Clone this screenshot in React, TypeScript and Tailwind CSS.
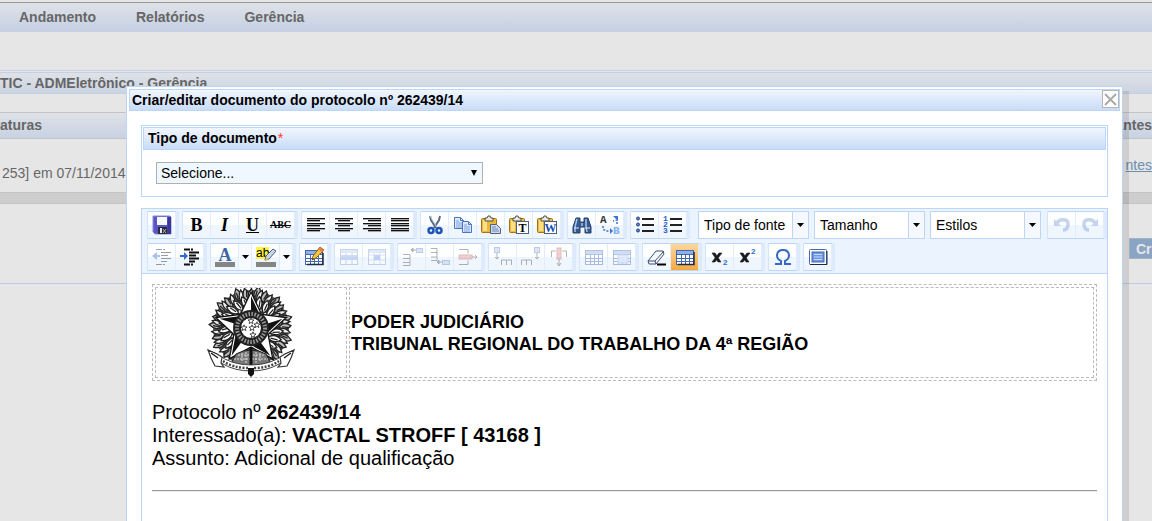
import type { ReactNode } from 'react'

const menuItems = ['Andamento', 'Relatórios', 'Gerência']

const BLUE = '#4468b0'
const INK = '#1c2b4a'

const Icon = ({ children, faded }: { children: ReactNode; faded?: boolean }) => (
  <svg width="20" height="20" viewBox="0 0 20 20" fill="none" className={faded ? 'overflow-visible opacity-40' : 'overflow-visible'}>
    {children}
  </svg>
)

const SaveIcon = () => (
  <Icon>
    <path d="M1 1h17l1 1v17H3l-2-2z" fill="#5a55c4" stroke="#8d8be0" />
    <path d="M16 2h3v17h-4z" fill="#3b3797" />
    <rect x="5" y="2" width="10" height="8" fill="#f6f8ff" />
    <rect x="6" y="12" width="9" height="7" fill="#2a2a3a" />
    <path d="M8 13h2v5H8z" fill="#e8e8f2" />
    <path d="M11 14l3 4M14 14l-3 4" stroke="#aaa" />
  </Icon>
)

const AlignIcon = ({ rows }: { rows: number[][] }) => (
  <Icon>
    {rows.map(([x, w], i) => (
      <g key={i} fill="#111">
        <rect x={x} y={3 + i * 2 + Math.floor(i / 2)} width={w} height="1" />
        <rect x={x} y={4 + i * 2 + Math.floor(i / 2)} width={w} height="1" opacity=".35" />
      </g>
    ))}
  </Icon>
)

const alignRows = {
  left: [[1, 18], [1, 13], [1, 18], [1, 13], [1, 18], [1, 13]],
  center: [[1, 18], [4, 12], [1, 18], [4, 12], [1, 18], [4, 12]],
  right: [[1, 18], [6, 13], [1, 18], [6, 13], [1, 18], [6, 13]],
  full: [[1, 18], [1, 18], [1, 18], [1, 18], [1, 18], [1, 18]],
}

const CutIcon = () => (
  <Icon>
    <path d="M5 1l1 4 5 8M15 1l-1 4-5 8" stroke="#596b85" strokeWidth="2" />
    <path d="M5 1l6 10" stroke="#b9c6d8" />
    <ellipse cx="6" cy="15.500" rx="2.500" ry="2.500" stroke="#1f56b5" strokeWidth="2.500" />
    <ellipse cx="14" cy="15.500" rx="2.500" ry="2.500" stroke="#1f56b5" strokeWidth="2.500" />
  </Icon>
)

const Page = ({ x, y }: { x: number; y: number }) => (
  <g transform={`translate(${x} ${y})`}>
    <path d="M.5.5h6l3 3v8h-9z" fill="#dce9fc" stroke="#4a74c4" />
    <path d="M6.500.5v3h3" stroke="#4a74c4" />
    <path d="M2 4h3M2 6h6M2 8h6M2 10h6" stroke="#7ea2de" />
  </g>
)

const CopyIcon = () => (
  <Icon>
    <Page x={1} y={2} />
    <Page x={9} y={6} />
  </Icon>
)

const PasteIcon = ({ letter }: { letter?: string }) => (
  <Icon>
    <rect x=".5" y="3.500" width="15" height="14" rx="1" fill="#e9b93b" stroke="#a37412" />
    <path d="M2 5h4v11H2z" fill="#f9df8c" />
    <path d="M4 6V3h2l1-2h2l1 2h2v3z" fill="#e3e6ec" stroke="#5c4d25" />
    {letter ? (
      <>
        <rect x="7.500" y="6.500" width="12" height="12" fill="#fff" stroke="#50607c" />
        <text x="13.500" y="17" textAnchor="middle" fontFamily="Liberation Serif" fontWeight="bold" fontSize="12" fill={letter === 'W' ? '#174fb0' : '#000'}>
          {letter}
        </text>
      </>
    ) : (
      <>
        <path d="M9.500 9.500h6l4 4v5h-10z" fill="#cfdcef" stroke="#50607c" />
        <path d="M11 12h4M11 14h6M11 16h7" stroke="#7088b0" />
      </>
    )}
  </Icon>
)

const FindIcon = () => (
  <Icon>
    <path d="M4 3h4v4h4V3h4l3 9v6h-6v-6H8v6H1v-6z" fill="#34588f" stroke="#26406e" />
    <path d="M5 4L3 12v5M14 4v7l1 6M10 8v3" stroke="#a9c4ea" strokeWidth="1.500" />
    <path d="M2 13h5M13 13h5" stroke="#dfeaf8" />
  </Icon>
)

const ReplaceIcon = () => (
  <Icon>
    <text x="0" y="8" fontFamily="Liberation Mono" fontWeight="bold" fontSize="11" fill="#333">A</text>
    <text x="13" y="19" fontFamily="Liberation Mono" fontWeight="bold" fontSize="11" fill="#7fb0ee">B</text>
    <path d="M3 11v3l3 2h5" stroke="#3e73d2" strokeWidth="1.500" strokeDasharray="2 1.500" />
    <path d="M10 13l3 3-3 3z" fill="#3e73d2" />
    <path d="M17 9V5l-4 1" stroke="#3e73d2" strokeWidth="1.500" strokeDasharray="2 1.500" />
    <path d="M13 1h5v5z" fill="#3e73d2" />
  </Icon>
)

const ListIcon = ({ numbered }: { numbered?: boolean }) => (
  <Icon>
    {[0, 1, 2].map(i => (
      <g key={i}>
        {numbered ? (
          <text x="0" y={6 + i * 6} fontFamily="Liberation Mono" fontWeight="bold" fontSize="8" fill="#2c5cc0">{i + 1}</text>
        ) : (
          <circle cx="3" cy={3.5 + i * 6} r="1.500" fill="#5a86d8" stroke="#243f7a" />
        )}
        <rect x="7" y={3 + i * 6} width="12" height="2" fill="#222" />
      </g>
    ))}
  </Icon>
)

const UndoIcon = ({ flip }: { flip?: boolean }) => (
  <Icon faded>
    <g transform={flip ? 'translate(20 0) scale(-1 1)' : undefined}>
      <path d="M2 4v7h7z" fill="#7898da" />
      <path d="M5 8c3-5 11-4 11 1 0 4-2 6-5 6" stroke="#7898da" strokeWidth="3.500" />
    </g>
  </Icon>
)

const IndentIcon = ({ out }: { out?: boolean }) => (
  <Icon faded={out}>
    <path d="M4 2.500h6M11 2.500h2M9 5.500h10M9 8.500h7M9 11.500h10M9 14.500h6M4 17.500h6M11 17.500h2" stroke="#111" strokeWidth={out ? 1 : 2} />
    <path d={out ? 'M5 5v8L0 9zM5 8h3v2H5z' : 'M4 5v8l4-4zM0 8h4v2H0z'} fill="#2f6cd0" />
  </Icon>
)

const TextColorIcon = () => (
  <Icon>
    <text x="10" y="14" textAnchor="middle" fontFamily="Liberation Serif" fontWeight="bold" fontSize="18" fill="#3d66a3">A</text>
    <rect x="0" y="15" width="20" height="5" fill="#858585" />
  </Icon>
)

const HighlightIcon = () => (
  <Icon>
    <rect x="0" y="0" width="13" height="12" fill="#fdf44a" />
    <text x="0" y="10" fontFamily="Liberation Sans" fontSize="12" fill="#000">ab</text>
    <path d="M17 2l3 2-7 8-4 1 1-4z" fill="#c9d6e9" stroke="#4c648c" />
    <path d="M8 14l3-3 1 2z" fill="#e8c52c" />
    <rect x="0" y="15" width="20" height="5" fill="#858585" />
  </Icon>
)

const Grid = () => (
  <>
    <rect x="1.500" y="3.500" width="17" height="14" fill="#fff" stroke={BLUE} />
    <path d="M2 4h16v3H2z" fill="#8fb0e8" />
    <path d="M6.500 7v10M10.500 7v10M14.500 7v10M2 7.500h16M2 11.500h16M2 14.500h16" stroke={BLUE} />
  </>
)

const EditTableIcon = () => (
  <Icon>
    <Grid />
    <path d="M3 17.500h16V6" stroke={INK} strokeWidth="1.500" />
    <path d="M16 0l4 3-8 8-4 2 1-4z" fill="#f3c53b" stroke="#8a651a" />
    <path d="M16 0l4 3-2 2-4-3z" fill="#e57a58" />
    <path d="M8 13l2-1-1-1z" fill="#222" />
  </Icon>
)

const RowPropsIcon = () => (
  <Icon faded>
    <rect x="1.500" y="2.500" width="17" height="15" fill="#fff" stroke="#7d98c8" />
    <path d="M2 3h16v3H2z" fill="#b7cbed" />
    <rect x="2" y="8" width="16" height="5" fill="#86a8e4" />
    <path d="M7 6v2M13 6v2M7 13v4M13 13v4" stroke="#7d98c8" />
  </Icon>
)

const CellPropsIcon = () => (
  <Icon faded>
    <rect x="1.500" y="2.500" width="17" height="15" fill="#fff" stroke="#7d98c8" />
    <path d="M2 3h16v3H2z" fill="#b7cbed" />
    <path d="M7 6v11M13 6v11M2 8h16M2 13h16" stroke="#a9bce0" />
    <rect x="7" y="8" width="6" height="5" fill="#6f96dd" />
  </Icon>
)

const RowBeforeIcon = () => (
  <Icon faded>
    <path d="M1 7.500h7v4H1M8 12v3M1 15.500h7v3H1" stroke="#444" />
    <path d="M10 3h4M9 3l2-2v4z" stroke="#444" fill="#444" />
    <rect x="14.500" y="1.500" width="6" height="4" fill="#a9c1ec" stroke="#6481b8" />
  </Icon>
)

const RowAfterIcon = () => (
  <Icon faded>
    <path d="M1 1.500h6v4H1M7 5v5H1M7 10v3.500H1" stroke="#444" />
    <path d="M8 15h4M7 15l2-2v4z" stroke="#444" fill="#444" />
    <rect x="12.500" y="13.500" width="7" height="4" fill="#a9c1ec" stroke="#6481b8" />
  </Icon>
)

const RowDeleteIcon = () => (
  <Icon faded>
    <path d="M1 2.500h9v4M1 17.500h9v-4" stroke="#444" />
    <rect x="1" y="8" width="13" height="4" fill="#e58a8a" stroke="#c05a5a" />
    <path d="M14 10h5M17 8l2 2-2 2" stroke="#444" />
  </Icon>
)

const ColIcon = ({ after }: { after?: boolean }) => (
  <Icon faded>
    <path d={after ? 'M.5 18v-5h5v5M5.500 13h5v5' : 'M8.500 18v-5h5v5M13.500 13h5v5'} stroke="#444" />
    <g transform={after ? 'translate(12 0)' : undefined}>
      <rect x="1.500" y=".5" width="5" height="5" fill="#a9c1ec" stroke="#6481b8" />
      <path d="M4 6v6M2 10l2 2 2-2" stroke="#444" />
    </g>
  </Icon>
)

const ColDeleteIcon = () => (
  <Icon faded>
    <path d="M2.500 10V4h4M17.500 10V4h-4" stroke="#444" />
    <rect x="8" y="1" width="4" height="11" fill="#e58a8a" stroke="#c05a5a" />
    <path d="M10 12v7M8 16l2 3 2-3" stroke="#444" />
  </Icon>
)

const GridIcon = ({ faded }: { faded?: boolean }) => (
  <Icon faded={faded}>
    <Grid />
    {!faded && <path d="M3 17.500h16V5" stroke={INK} strokeWidth="1.500" />}
  </Icon>
)

const MergeIcon = () => (
  <Icon faded>
    <Grid />
    <rect x="6" y="8" width="10" height="8" fill="#c2d6f7" stroke="#86a8e4" />
  </Icon>
)

const EraserIcon = () => (
  <Icon>
    <path d="M1 14l8-10h7l1 3-8 10H2z" fill="#f4f7fc" stroke="#3d4f70" />
    <path d="M1 14h7l9-10M8 14l1 3" stroke="#3d4f70" />
    <path d="M10 17.500h9" stroke="#000" strokeWidth="2" />
  </Icon>
)

const ScriptIcon = ({ sup }: { sup?: boolean }) => (
  <Icon>
    <path d="M2 6h3l6 9H8zM9 6h3l-7 9H2z" fill="#1c1c1c" stroke="#1c1c1c" strokeWidth=".6" />
    <text x="13" y={sup ? 7 : 18} fontFamily="Liberation Sans" fontWeight="bold" fontSize="8" fill="#2f6cd0">2</text>
  </Icon>
)

const OmegaIcon = () => (
  <Icon>
    <path d="M2 17h6v-3C2 11 3 3 10 3s8 8 2 11v3h6" stroke="#3567c4" strokeWidth="2" />
  </Icon>
)

const FullscreenIcon = () => (
  <Icon>
    <rect x="1.500" y="2.500" width="17" height="15" rx="1" fill="#fff" stroke={BLUE} />
    <path d="M2 17.500h17V4" stroke={INK} />
    <rect x="4" y="5" width="12" height="10" fill="#6d97e4" stroke={BLUE} />
    <path d="M6 7.500h8M6 10h8M6 12.500h8" stroke="#c9dcfb" />
  </Icon>
)

type Tool = { label: string; icon: ReactNode; menu?: boolean; active?: boolean }

const mainTools: Tool[][] = [
  [{ label: 'Salvar', icon: <SaveIcon /> }],
  [
    { label: 'Negrito', icon: <span className="font-['Liberation_Serif',serif] text-[18px] font-black">B</span> },
    { label: 'Itálico', icon: <span className="font-['Liberation_Serif',serif] text-[18px] font-bold italic">I</span> },
    { label: 'Sublinhado', icon: <span className="font-['Liberation_Serif',serif] text-[18px] font-bold underline">U</span> },
    { label: 'Riscado', icon: <span className="font-['Liberation_Serif',serif] text-[10px] font-bold line-through">ABC</span> },
  ],
  [
    { label: 'Alinhar à esquerda', icon: <AlignIcon rows={alignRows.left} /> },
    { label: 'Centralizar', icon: <AlignIcon rows={alignRows.center} /> },
    { label: 'Alinhar à direita', icon: <AlignIcon rows={alignRows.right} /> },
    { label: 'Justificar', icon: <AlignIcon rows={alignRows.full} /> },
  ],
  [
    { label: 'Recortar', icon: <CutIcon /> },
    { label: 'Copiar', icon: <CopyIcon /> },
    { label: 'Colar', icon: <PasteIcon /> },
    { label: 'Colar como texto', icon: <PasteIcon letter="T" /> },
    { label: 'Colar do Word', icon: <PasteIcon letter="W" /> },
  ],
  [
    { label: 'Localizar', icon: <FindIcon /> },
    { label: 'Substituir', icon: <ReplaceIcon /> },
  ],
  [
    { label: 'Lista', icon: <ListIcon /> },
    { label: 'Lista numerada', icon: <ListIcon numbered /> },
  ],
]

const historyTools: Tool[] = [
  { label: 'Desfazer', icon: <UndoIcon /> },
  { label: 'Refazer', icon: <UndoIcon flip /> },
]

const tableTools: Tool[][] = [
  [
    { label: 'Diminuir recuo', icon: <IndentIcon out /> },
    { label: 'Aumentar recuo', icon: <IndentIcon /> },
  ],
  [
    { label: 'Cor do texto', icon: <TextColorIcon />, menu: true },
    { label: 'Cor de fundo', icon: <HighlightIcon />, menu: true },
  ],
  [{ label: 'Tabela', icon: <EditTableIcon /> }],
  [
    { label: 'Propriedades da linha', icon: <RowPropsIcon /> },
    { label: 'Propriedades da célula', icon: <CellPropsIcon /> },
  ],
  [
    { label: 'Inserir linha antes', icon: <RowBeforeIcon /> },
    { label: 'Inserir linha depois', icon: <RowAfterIcon /> },
    { label: 'Remover linha', icon: <RowDeleteIcon /> },
  ],
  [
    { label: 'Inserir coluna antes', icon: <ColIcon /> },
    { label: 'Inserir coluna depois', icon: <ColIcon after /> },
    { label: 'Remover coluna', icon: <ColDeleteIcon /> },
  ],
  [
    { label: 'Dividir células', icon: <GridIcon faded /> },
    { label: 'Mesclar células', icon: <MergeIcon /> },
  ],
  [
    { label: 'Remover formatação', icon: <EraserIcon /> },
    { label: 'Linhas de grade', icon: <GridIcon />, active: true },
  ],
  [
    { label: 'Subscrito', icon: <ScriptIcon /> },
    { label: 'Sobrescrito', icon: <ScriptIcon sup /> },
  ],
  [{ label: 'Caractere especial', icon: <OmegaIcon /> }],
  [{ label: 'Tela cheia', icon: <FullscreenIcon /> }],
]

const combos = ['Tipo de fonte', 'Tamanho', 'Estilos']

const Caret = () => (
  <svg width="7" height="4" viewBox="0 0 7 4" className="pointer-events-none">
    <path d="M0 0h7L3.500 4z" fill="#000" />
  </svg>
)

const ToolGroup = ({ tools }: { tools: Tool[] }) => (
  <div className="flex h-7 border-y border-[#bdd6f8] shadow-[-1px_0_0_#d3e4fb,3px_0_0_#dceafc]">
    {tools.map(tool => (
      <div key={tool.label} className="flex">
        <button
          type="button"
          aria-label={tool.label}
          className={`flex w-7 items-center justify-center border-r border-[#e1edfc] leading-5 ${
            tool.active
              ? 'bg-gradient-to-b from-[#fbd79a] to-[#f6a93b]'
              : 'bg-gradient-to-b from-[#fdfeff] from-50% to-[#f0f6fe] to-50%'
          }`}
        >
          {tool.icon}
        </button>
        {tool.menu && (
          <button
            type="button"
            aria-label={`${tool.label}: opções`}
            className="flex w-[13px] items-center justify-center border-r border-[#e1edfc] bg-[#f7fbff]"
          >
            <Caret />
          </button>
        )}
      </div>
    ))}
  </div>
)

const Combo = ({ label }: { label: string }) => (
  <div className="relative flex h-7 w-[111px]">
    <select
      aria-label={label}
      className="w-full appearance-none border border-[#bdd6f8] bg-white pl-[5px] pr-4 text-[14px]"
    >
      <option>{label}</option>
    </select>
    <span className="pointer-events-none absolute inset-y-0 right-0 flex w-[17px] items-center justify-center border border-[#bdd6f8] bg-[#f5f9ff]">
      <Caret />
    </span>
  </div>
)

const point = (r: number, deg: number, cx = 45, cy = 40) => {
  const a = (deg * Math.PI) / 180
  return `${(cx + r * Math.sin(a)).toFixed(2)},${(cy - r * Math.cos(a)).toFixed(2)}`
}

const starPoints = (r: number, inner: number, cx: number, cy: number) =>
  Array.from({ length: 10 }, (_, i) => point(i % 2 ? inner : r, i * 36, cx, cy)).join(' ')

const wreath = Array.from({ length: 18 }, (_, i) => -136 + i * 16)

const Crest = () => (
  <svg width="90" height="89" viewBox="0 0 90 89" role="img" aria-label="Brasão da República" className="mx-auto block">
    {/* wreath */}
    <circle cx="45" cy="40" r="28" fill="none" stroke="#555" strokeWidth="20" />
    {wreath.map((deg, i) => (
      <g key={deg} transform={`rotate(${deg} 45 40)`} stroke="#222" strokeWidth="1.300">
        <path d={i % 2 ? 'M47 -2q5 6 -1 13q-6 -5 1 -13z' : 'M44 0q6 5 1 12q-6 -4 -1 -12z'} fill="#bbb" />
        <path d="M51 1q2 7 -4 11q-2 -6 4 -11z" fill="#eee" />
        <path d="M40 8q8 4 5 13q-8 -4 -5 -13z" fill="#fff" />
        <path d="M50 10q1 7 -4 11" fill="none" stroke="#eee" strokeWidth="1.500" />
        <path d="M42 11l2 7M46 2l-1 7" fill="none" />
      </g>
    ))}
    {/* star */}
    <polygon points={starPoints(37, 18, 45, 41)} fill="#fff" stroke="#111" strokeWidth="1.300" />
    {[0, 72, 144, 216, 288].map(deg => (
      <polygon key={deg} points={`${point(33, deg, 45, 41)} ${point(16, deg + 36, 45, 41)} 45,41`} fill="#111" />
    ))}
    {/* ring and southern cross */}
    <circle cx="45" cy="40" r="14" fill="#fff" stroke="#222" strokeWidth="8" />
    <circle cx="45" cy="40" r="14" fill="none" stroke="#999" strokeWidth="4" strokeDasharray="1.500 1.500" />
    <circle cx="45" cy="40" r="10.500" fill="#fff" stroke="#111" />
    {[[45, 33], [38, 40], [46, 40], [51, 37], [47, 47]].map(([x, y]) => (
      <polygon key={`${x}-${y}`} points={starPoints(3.2, 1.4, x, y)} fill="#fff" stroke="#222" strokeWidth=".8" />
    ))}
    {/* sword hilt and ribbon */}
    <path d="M30 66q15-8 30 0l4 8q-19 8-38 0z" fill="#777" stroke="#222" />
    <path d="M32 67h26M28 71h34M36 65v9M40 64v12M50 64v12M54 65v9" stroke="#ddd" strokeDasharray="2 1" />
    <path d="M43.500 59h3v26h-3z" fill="#111" />
    <path d="M2 62q5 10 15 14 12 7 28 7t28-7q10-4 15-14l-9 4q-14 11-34 11T11 66z" fill="#fff" stroke="#444" />
    <path d="M2 62l9 4 5 3-1 6 3 4-9-1-4-8zM88 62l-9 4-5 3 1 6-3 4 9-1 4-8z" fill="#fff" stroke="#333" strokeWidth="1.200" />
    <path d="M5 65l7 5M85 65l-7 5" stroke="#222" strokeWidth="1.500" />
    <path d="M17 73q10 7 25 7M48 80q15 0 25-7" fill="none" stroke="#444" strokeWidth="2.500" strokeDasharray="2 1.500" />
    <path d="M42 80h6v6l-3 3-3-3z" fill="#111" />
  </svg>
)

const Backdrop = () => (
  <div className="text-[#666]">
    <nav className="mt-[2px] flex h-[30px] items-center gap-10 border-t border-[#999] bg-gradient-to-b from-[#dfe2e7] to-[#c5d0e3] pl-[19px] text-[14px] font-bold">
      {menuItems.map(item => (
        <a key={item} href="#">{item}</a>
      ))}
    </nav>
    <div className="mt-[38px] border-t border-[#c5d0e3] pt-px">
      <h1 className="h-[22px] overflow-hidden whitespace-nowrap border-y border-[#c5d0e3] bg-gradient-to-b from-[#dfe2e7] to-[#cbd4e3] text-[14px] font-bold leading-5">
        TIC - ADMEletrônico - Gerência
      </h1>
    </div>
    <div className="mt-[18px] flex h-[27px] items-center justify-between border-y border-[#c4c4c4] bg-gradient-to-b from-[#dfe2e7] to-[#c8d2e3] text-[14px] font-bold">
      <h2>aturas</h2>
      <h2>antes</h2>
    </div>
    <div className="flex h-[53px] items-center justify-between text-[14px]">
      <p className="pl-[2px] pt-4">253] em 07/11/2014</p>
      <a href="#" className="text-[#6d8fae] underline">ntes</a>
    </div>
    <div className="h-3 border-y border-[#c4c4c4] bg-[#cdcdcd]" />
    <div className="flex h-[80px] items-center justify-end border-b border-[#bccbe0] pt-[10px]">
      <button type="button" className="h-[21px] w-[23px] border border-r-0 border-[#a3b3c3] bg-[#8aa5c4] pl-[6px] text-left text-[14px] font-bold leading-5 text-[#e6e6e6]">
        Cr
      </button>
    </div>
  </div>
)

const DocumentType = () => (
  <section className="border border-[#bcd6f8] p-px pb-3">
    <h3 className="h-[23px] border border-[#bcd6f8] bg-gradient-to-b from-[#f1f6fe] to-[#c9dcf8] pl-1 text-[14px] font-bold leading-5">
      <label htmlFor="tipo">Tipo de documento</label>
      <span className="pl-px font-normal text-[#f33]">*</span>
    </h3>
    <div className="relative ml-[13px] mt-3 flex w-[327px] items-center">
      <select id="tipo" className="h-[22px] w-full appearance-none border border-[#b0b0b0] bg-[#f0f8ff] pl-1 text-[14px]">
        <option>Selecione...</option>
      </select>
      <svg width="8" height="6" viewBox="0 0 8 6" className="pointer-events-none absolute right-[5px]">
        <path d="M1 0h6L4 6z" fill="#000" />
      </svg>
    </div>
  </section>
)

const Editor = () => (
  <section className="mt-[11px] grow border border-b-0 border-[#bcd6f8]">
    <div role="toolbar" aria-label="Editor" className="flex flex-col gap-1 border-b border-[#bcd6f8] bg-[#ebf3fe] py-[2px] pl-[6px]">
      <div className="flex gap-[7px]">
        {mainTools.map((tools, i) => <ToolGroup key={i} tools={tools} />)}
        <div className="flex gap-[5px] pl-1">
          {combos.map(label => <Combo key={label} label={label} />)}
        </div>
        <ToolGroup tools={historyTools} />
      </div>
      <div className="flex gap-[7px]">
        {tableTools.map((tools, i) => <ToolGroup key={i} tools={tools} />)}
      </div>
    </div>
    <article className="p-[10px] text-[20px] leading-[23px]">
      <table className="w-full border-separate border-spacing-[2px] border border-dashed border-[#bbb]">
        <tbody>
          <tr>
            <td className="w-[192px] border border-dashed border-[#bbb] p-0">
              <Crest />
            </td>
            <td className="border border-dashed border-[#bbb] p-px text-[18px] font-bold leading-[22px]">
              PODER JUDICIÁRIO
              <br />
              TRIBUNAL REGIONAL DO TRABALHO DA 4ª REGIÃO
            </td>
          </tr>
        </tbody>
      </table>
      <p className="mt-5">Protocolo nº <strong>262439/14</strong></p>
      <p>Interessado(a): <strong>VACTAL STROFF [ 43168 ]</strong></p>
      <p>Assunto: Adicional de qualificação</p>
      <hr className="mt-5 border-b border-t border-b-[#eee] border-t-[#999]" />
    </article>
  </section>
)

const App = () => (
  <div className="relative h-screen overflow-hidden bg-[#e6e6e6] font-['Liberation_Sans',sans-serif] text-black">
    <Backdrop />
    <div className="absolute bottom-0 left-[132px] right-[23px] top-[91px] bg-black/10" />
    <div
      role="dialog"
      aria-labelledby="titulo"
      className="absolute bottom-0 left-[126px] right-[29px] top-[86px] flex flex-col border border-b-0 border-[#bcd6f8] bg-white p-[2px] pb-0"
    >
      <header className="flex h-[22px] justify-between border border-[#bcd6f8] bg-gradient-to-b from-[#f1f6fe] to-[#c9dcf8] pl-[2px]">
        <h2 id="titulo" className="text-[14px] font-bold leading-5">Criar/editar documento do protocolo nº 262439/14</h2>
        <button type="button" aria-label="Fechar" className="flex h-[18px] w-[17px] items-center justify-center border border-[#b5b5b5] bg-white">
          <svg width="13" height="13" viewBox="0 0 13 13" fill="none" stroke="#aaa" strokeWidth="2">
            <path d="M1 1l11 11M12 1L1 12" />
          </svg>
        </button>
      </header>
      <div className="flex grow flex-col px-3 pt-[14px]">
        <DocumentType />
        <Editor />
      </div>
    </div>
  </div>
)

export default App
